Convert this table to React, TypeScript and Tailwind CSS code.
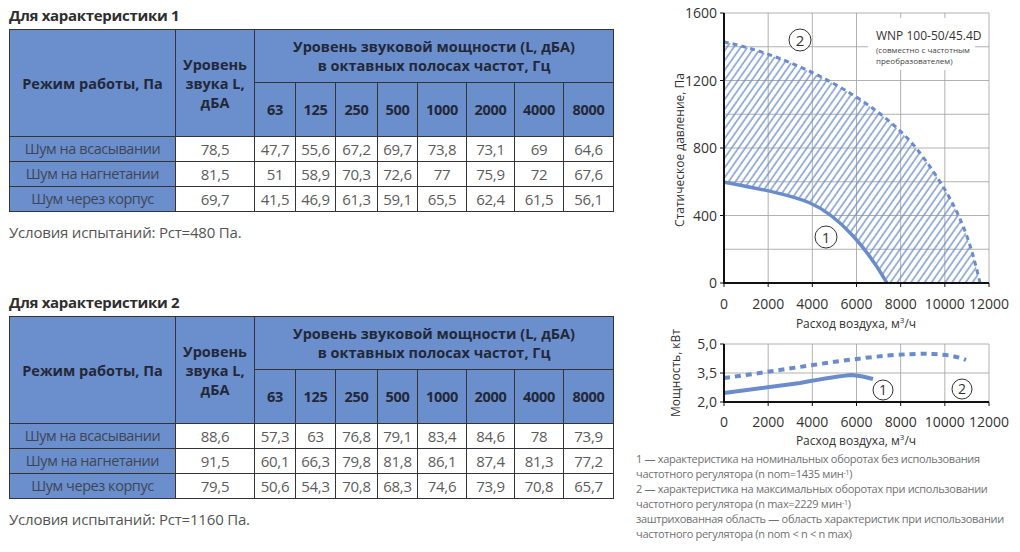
import React from "react";

const FONT = { fontFamily: '"Open Sans", "Noto Sans", sans-serif' };

const freqs = ["63", "125", "250", "500", "1000", "2000", "4000", "8000"];

type Row = { name: string; total: string; vals: string[] };

const t1: Row[] = [
  { name: "Шум на всасывании", total: "78,5", vals: ["47,7", "55,6", "67,2", "69,7", "73,8", "73,1", "69", "64,6"] },
  { name: "Шум на нагнетании", total: "81,5", vals: ["51", "58,9", "70,3", "72,6", "77", "75,9", "72", "67,6"] },
  { name: "Шум через корпус", total: "69,7", vals: ["41,5", "46,9", "61,3", "59,1", "65,5", "62,4", "61,5", "56,1"] },
];
const t2: Row[] = [
  { name: "Шум на всасывании", total: "88,6", vals: ["57,3", "63", "76,8", "79,1", "83,4", "84,6", "78", "73,9"] },
  { name: "Шум на нагнетании", total: "91,5", vals: ["60,1", "66,3", "79,8", "81,8", "86,1", "87,4", "81,3", "77,2"] },
  { name: "Шум через корпус", total: "79,5", vals: ["50,6", "54,3", "70,8", "68,3", "74,6", "73,9", "70,8", "65,7"] },
];

function NoiseTable({ title, rows, cond, className }: { title: string; rows: Row[]; cond: string; className?: string }) {
  const th = "border border-[#343434] bg-[#6b8fcd] text-[#232838] font-bold text-[14.5px] leading-[19px] p-0 text-center align-middle";
  const td = "border border-[#343434] h-[25px] p-0 text-center align-middle text-[15px] text-[#5c5c5c] tracking-[-0.3px]";
  return (
    <div className={className}>
      <div className="text-[15px] leading-[20px] font-bold text-[#2e2e2e] tracking-[-0.3px]">{title}</div>
      <table className="mt-[4px] border-collapse table-fixed w-[604px]">
        <colgroup>
          <col className="w-[166px]" />
          <col className="w-[79px]" />
          <col className="w-[41px]" />
          <col className="w-[40px]" />
          <col className="w-[42px]" />
          <col className="w-[40px]" />
          <col className="w-[49px]" />
          <col className="w-[48px]" />
          <col className="w-[49px]" />
          <col className="w-[50px]" />
        </colgroup>
        <thead>
          <tr className="h-[53px]">
            <th rowSpan={2} className={th}>Режим работы, Па</th>
            <th rowSpan={2} className={th}>
              Уровень
              <br />
              звука L,
              <br />
              дБА
            </th>
            <th colSpan={8} className={th}>
              Уровень звуковой мощности (L, дБА)
              <br />
              в октавных полосах частот, Гц
            </th>
          </tr>
          <tr className="h-[54px]">
            {freqs.map((f) => (
              <th key={f} className={th + " tracking-[-0.3px]"}>{f}</th>
            ))}
          </tr>
        </thead>
        <tbody>
          {rows.map((r) => (
            <tr key={r.name}>
              <td className={td + " bg-[#6b8fcd] !text-[#404556] !text-[14.5px] !tracking-[-0.45px]"}>{r.name}</td>
              <td className={td}>{r.total}</td>
              {r.vals.map((v, i) => (
                <td key={i} className={td}>{v}</td>
              ))}
            </tr>
          ))}
        </tbody>
      </table>
      <div className="mt-[10px] text-[15px] leading-[20px] text-[#555] tracking-[-0.2px]">{cond}</div>
    </div>
  );
}

const BLUE = "#6a8ccb";

function Charts() {
  const X0 = 724;
  const X1 = 989;
  const dx = (X1 - X0) / 6;
  const xs = Array.from({ length: 7 }, (_, i) => X0 + i * dx);
  const xl = ["0", "2000", "4000", "6000", "8000", "10000", "12000"];
  const Y0 = 283;
  const Ytop = 13;
  const dy = (Y0 - Ytop) / 8;
  const ys = Array.from({ length: 9 }, (_, k) => Y0 - k * dy);
  const top2 = "M724 42 C 790 55, 880 100, 920 153 S 970 240, 980 283";
  const c1 = "M724 182 C 760 189, 792 195, 810 203 C 840 216, 868 250, 887 283";
  const region =
    "M724 42 C 790 55, 880 100, 920 153 S 970 240, 980 283 L 887 283 C 868 250, 840 216, 810 203 C 792 195, 760 189, 724 182 Z";
  const lowY = [344, 373, 402];
  return (
    <svg width={400} height={449} viewBox="620 0 400 449" className="block" style={FONT}>
      <defs>
        <pattern id="hatch" patternUnits="userSpaceOnUse" width="5.6" height="10" patternTransform="rotate(35)">
          <line x1="1" y1="0" x2="1" y2="10" stroke={BLUE} strokeWidth="1.3" />
        </pattern>
      </defs>
      {ys.slice(1).map((y) => (
        <line key={"h" + y} x1={X0} x2={X1} y1={y} y2={y} stroke="#a8a8a8" strokeWidth="0.9" />
      ))}
      {xs.slice(1).map((x) => (
        <line key={"v" + x} x1={x} x2={x} y1={Ytop} y2={Y0} stroke="#a8a8a8" strokeWidth="0.9" />
      ))}
      <rect x="868" y="18" width="107" height="52" fill="white" />
      <text x="876" y="40" fontSize="12" fill="#333">WNP 100-50/45.4D</text>
      <text x="876" y="53" fontSize="8" fill="#444">(совместно с частотным</text>
      <text x="876" y="64" fontSize="8" fill="#444">преобразователем)</text>
      <path d={region} fill="url(#hatch)" />
      <path d={top2} fill="none" stroke={BLUE} strokeWidth="3" strokeDasharray="5 4" />
      <path d={c1} fill="none" stroke={BLUE} strokeWidth="3.5" />
      <line x1={X0} x2={X0} y1={Ytop} y2={Y0 + 1} stroke="#111" strokeWidth="2" />
      <line x1={X0 - 1} x2={X1} y1={Y0} y2={Y0} stroke="#111" strokeWidth="2" />
      {[0, 2, 4, 6, 8].map((k) => (
        <line key={"yt" + k} x1={X0 - 4} x2={X0} y1={ys[k]} y2={ys[k]} stroke="#111" strokeWidth="1" />
      ))}
      {xs.map((x) => (
        <line key={"xt" + x} x1={x} x2={x} y1={Y0} y2={Y0 + 4} stroke="#111" strokeWidth="1" />
      ))}
      {[0, 2, 4, 6, 8].map((k) => (
        <text key={"yl" + k} x={717} y={ys[k] + 5} fontSize="14" fill="#333" textAnchor="end">
          {String(k * 200)}
        </text>
      ))}
      {xs.map((x, i) => (
        <text key={"xl" + i} x={x} y={309} fontSize="14" fill="#333" textAnchor="middle">
          {xl[i]}
        </text>
      ))}
      <text x={856} y={328} fontSize="12" fill="#333" textAnchor="middle">
        Расход воздуха, м<tspan dy="-5" fontSize="8">3</tspan>
        <tspan dy="5">/ч</tspan>
      </text>
      <text x={0} y={0} fontSize="12" fill="#333" textAnchor="middle" transform="translate(684 150) rotate(-90)">
        Статическое давление, Па
      </text>
      <circle cx={800} cy={40} r={11} fill="white" stroke="#333" strokeWidth="1" />
      <text x={800} y={45.5} fontSize="15" fill="#333" textAnchor="middle">2</text>
      <circle cx={826} cy={237} r={11} fill="white" stroke="#333" strokeWidth="1" />
      <text x={826} y={242.5} fontSize="15" fill="#333" textAnchor="middle">1</text>

      {lowY.slice(0, 2).map((y) => (
        <line key={"lh" + y} x1={X0} x2={X1} y1={y} y2={y} stroke="#a8a8a8" strokeWidth="0.9" />
      ))}
      {xs.slice(1).map((x) => (
        <line key={"lv" + x} x1={x} x2={x} y1={344} y2={402} stroke="#a8a8a8" strokeWidth="0.9" />
      ))}
      <path d="M724 378 C 800 368, 880 352, 933 354 Q 955 355 966 360" fill="none" stroke={BLUE} strokeWidth="4" strokeDasharray="6 5" />
      <path d="M724 393 L 800 383 Q 838 376 852 375 Q 863 376 873 379" fill="none" stroke={BLUE} strokeWidth="4" />
      <line x1={X0} x2={X0} y1={344} y2={403} stroke="#111" strokeWidth="2" />
      <line x1={X0 - 1} x2={X1} y1={402} y2={402} stroke="#111" strokeWidth="2" />
      {lowY.map((y) => (
        <line key={"lyt" + y} x1={X0 - 4} x2={X0} y1={y} y2={y} stroke="#111" strokeWidth="1" />
      ))}
      {xs.map((x) => (
        <line key={"lxt" + x} x1={x} x2={x} y1={402} y2={406} stroke="#111" strokeWidth="1" />
      ))}
      {["5,0", "3,5", "2,0"].map((l, i) => (
        <text key={l} x={717} y={lowY[i] + 5} fontSize="14" fill="#333" textAnchor="end">
          {l}
        </text>
      ))}
      {xs.map((x, i) => (
        <text key={"lxl" + i} x={x} y={427} fontSize="14" fill="#333" textAnchor="middle">
          {xl[i]}
        </text>
      ))}
      <text x={856} y={445} fontSize="12" fill="#333" textAnchor="middle">
        Расход воздуха, м<tspan dy="-5" fontSize="8">3</tspan>
        <tspan dy="5">/ч</tspan>
      </text>
      <text x={0} y={0} fontSize="12" fill="#333" textAnchor="middle" transform="translate(680 373) rotate(-90)">
        Мощность, кВт
      </text>
      <circle cx={883} cy={390} r={10} fill="white" stroke="#333" strokeWidth="1" />
      <text x={883} y={395} fontSize="14" fill="#333" textAnchor="middle">1</text>
      <circle cx={962} cy={389} r={10} fill="white" stroke="#333" strokeWidth="1" />
      <text x={962} y={394} fontSize="14" fill="#333" textAnchor="middle">2</text>
    </svg>
  );
}

export default function App() {
  return (
    <div className="w-[1020px] h-[552px] bg-white flex overflow-hidden" style={FONT}>
      <div className="w-[620px] pl-[9px] pt-[5px] flex flex-col">
        <NoiseTable title="Для характеристики 1" rows={t1} cond="Условия испытаний: Рст=480 Па." />
        <NoiseTable className="mt-[50px]" title="Для характеристики 2" rows={t2} cond="Условия испытаний: Рст=1160 Па." />
      </div>
      <div className="flex flex-col">
        <Charts />
        <div className="pl-[16px] mt-[2px] text-[11px] leading-[15px] text-[#707070] tracking-[-0.3px]">
          <div>1 — характеристика на номинальных оборотах без использования</div>
          <div>
            частотного регулятора (n nom=1435 мин<sup className="text-[7px]">-1</sup>)
          </div>
          <div>2 — характеристика на максимальных оборотах при использовании</div>
          <div>
            частотного регулятора (n max=2229 мин<sup className="text-[7px]">-1</sup>)
          </div>
          <div>заштрихованная область — область характеристик при использовании</div>
          <div>частотного регулятора (n nom &lt; n &lt; n max)</div>
        </div>
      </div>
    </div>
  );
}
